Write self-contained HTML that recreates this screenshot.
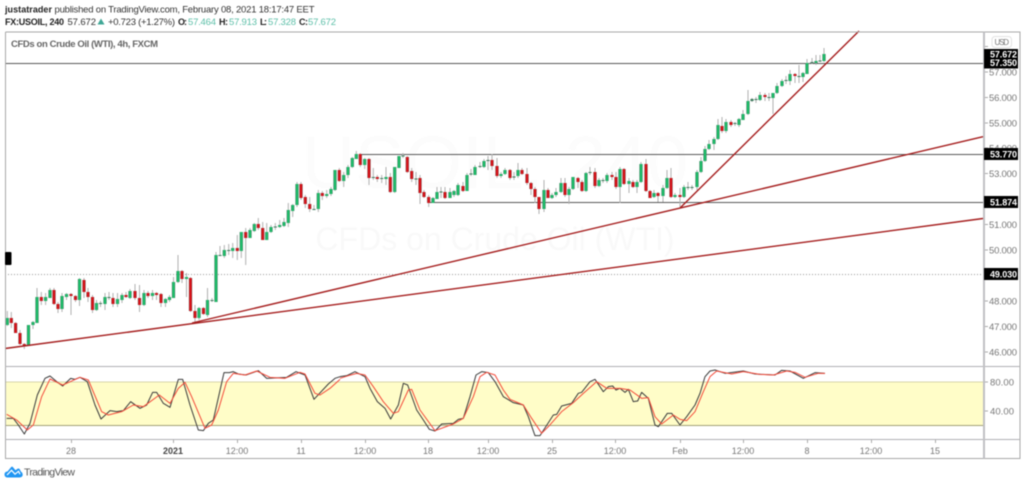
<!DOCTYPE html>
<html><head><meta charset="utf-8"><style>
html,body{margin:0;padding:0;background:#fff;width:1024px;height:485px;overflow:hidden}
svg{display:block;filter:blur(.4px)}
text{font-family:"Liberation Sans",sans-serif}
.h{font-size:9.5px;fill:#333}.b{font-weight:bold;fill:#222;font-size:9px}.t{fill:#5cbfa8}
.p{font-size:9.5px;fill:#777}.x{font-size:9px;fill:#777;text-anchor:middle}
.w{font-size:9px;fill:#fff;font-weight:bold}
</style></head><body>
<svg width="1024" height="485" viewBox="0 0 1024 485" xmlns="http://www.w3.org/2000/svg">
<rect width="1024" height="485" fill="#fff"/>
<!-- header -->
<text class="h b" x="5" y="12.5" textLength="47">justatrader</text>
<text class="h" x="54.5" y="12.5" textLength="260">published on TradingView.com, February 08, 2021 18:17:47 EET</text>
<text class="h b" x="5" y="25" textLength="59">FX:USOIL, 240</text>
<text class="h" x="67.5" y="25" textLength="28.5">57.672</text>
<path d="M97.5 24.5L101 18.5L104.5 24.5Z" fill="#3fa796"/>
<text class="h" x="108" y="25" textLength="67">+0.723 (+1.27%)</text>
<text class="h b" x="178" y="25" textLength="9">O:</text><text class="h t" x="188" y="25" textLength="28">57.464</text>
<text class="h b" x="219" y="25" textLength="9">H:</text><text class="h t" x="229" y="25" textLength="28">57.913</text>
<text class="h b" x="260" y="25" textLength="7">L:</text><text class="h t" x="268" y="25" textLength="28">57.328</text>
<text class="h b" x="299" y="25" textLength="9">C:</text><text class="h t" x="308" y="25" textLength="28">57.672</text>
<!-- watermark -->
<text x="495" y="188" text-anchor="middle" font-size="74" fill="#fcfcfc">USOIL, 240</text>
<text x="495" y="250" text-anchor="middle" font-size="32" fill="#f9f9f9">CFDs on Crude Oil (WTI)</text>
<text x="11" y="47" font-size="9.5" font-weight="bold" fill="#666" textLength="147">CFDs on Crude Oil (WTI), 4h, FXCM</text>
<!-- indicator band -->
<rect x="5" y="382" width="979" height="43.5" fill="#fffdc8"/>
<path d="M5 382H984" stroke="#d8d6a8" stroke-width="1"/>
<path d="M5 425.5H984" stroke="#a3a278" stroke-width="1"/>
<!-- horizontals -->
<path d="M5 274.5H984" stroke="#999" stroke-width="1" stroke-dasharray="1 2"/>
<path d="M5 63.5H984M360 154.5H984M428 202.5H984" stroke="#5a5a5a" stroke-width="1" fill="none"/>
<!-- candles -->
<path fill="none" stroke="#b0b0b0" stroke-width="1" d="M7.3 311V326M11.3 312V328M15.6 322V333M20 330V345M24.3 343V349M28.5 325V346M33 321V329M37 288V323M41.3 292V305M45.6 293V305M50 288V298M54 288V305M58 302V313M62 293V312M66.5 293V300M71 293V315M75.5 295V302M79.5 278V306M84 278V298M88 288V302M92.5 295V313M96.5 300V311M100.5 301V307M105 293V310M109 292V300M113 293V307M117.5 293V307M122 293V303M126 292V298M130 289V299M135 284V300M139.5 285V312M144 290V306M148 291V298M152.5 290V300M156.5 292V300M161 293V307M165.5 298V307M169.5 295V302M173.5 277V298M178 255V283M182 270V283M186.5 273V297M190.5 277V312M195 305V322M199 307V320M203.5 307V315M207.5 288V317M212 298V302M216 252V302
M220 246V256M224.3 245V258M228.7 244V255M232.7 243V258M237.3 235V260M241.3 232V258M245.7 228V265M250 228V238M254.3 223V232M258.3 218V230M262.7 222V240M266.7 223V240M271 225V233M275.3 223V230M279.7 220V228M284 218V227M288.3 203V227M292.7 204V217M297 182V207M301 182V200M305.3 195V208M309.7 197V212M314 205V210M318.3 190V212M322.3 191V200M326.7 190V198M331 187V196M335 170V191M339.3 168V182M343.7 172V187M348 165V178M352.3 157V168M356.3 151V159M360.3 153V167M364.7 158V169M369 158V185M373.3 168V180M377.3 175V182M381.7 175V183M386 167V185M390.3 173V193M394.7 167V193M399 156V168M403 153V158M407.3 156V173M411.7 168V182M416 172V185M420 175V204M424 190V198M428.7 195V207
M433 197V203M437 187V199M441 187V198M445 187V199M450 188V198M454 190V197M458 183V196M463 182V192M467 173V191M471 169V176M475 165V175M480 162V168M484 159V168M488 156V170M492 154V170M497 158V178M501 172V178M505 168V175M510 169V180M514 172V180M518 163V178M522 168V175M527 168V185M531 182V195M535 187V203M539 197V214M544 180V212M548 188V198M552 193V199M556 188V197M561 178V193M565 178V197M569 187V204M573 177V190M578 177V188M582 180V192M586 172V192M590 167V175M595 168V188M599 178V187M603 178V183M607 173V183M612 172V180M616 172V189M620 167V203M624 168V185M629 178V193M633 180V188M637 180V193M641 162V183M646 159V192M650 190V198M654 190V198M658 192V202M663 185V202M667 170V189M671 168V198M675 193V198M680 188V207M684 185V198M688 182V190M692 185V190M697 170V190
M701 157V173M705 146V162M709 140V150M714 137V150M718 119V140M722 117V133M726 119V133M731 120V127M735 122V126M739 118V127M743 110V120M748 90V115M752 98V102M756 97V103M760 92V101M765 93V101M769 93V101M773 93V114M777 83V94M782 79V87M786 76V84M790 70V85M795 73V83M799 65V83M803 72V82M807 59V74M812 58V64M816 55V65M820 55V62M824 48V62"/>
<path id="gb" fill="none" stroke="#3d7a5c" stroke-width="3.2" d="M7.3 318V325M28.5 325V346M33 322V325M37 297V323M45.6 297V301M50 290V298M62 296V309M66.5 294V297M79.5 279V300M96.5 303V310M100.5 303V304M105 297V304M109 297V298M117.5 299V304M122 295V300M130 291V298M144 293V305M152.5 293V296M165.5 299V303M169.5 297V300M173.5 282V298M178 271V282M186.5 277V279M199 308V318M207.5 300V315M212 300V301M216 255V302
M220 255V256M224.3 250V256M228.7 250V251M232.7 248V251M241.3 232V251M250 230V238M254.3 224V231M266.7 232V240M271 227V232M275.3 226.5V227.5M279.7 225V227M284 222V226M288.3 210V223M292.7 205V211M297 184V205M314 209V210M318.3 193V209M326.7 194V196M331 189V194M335 170V190M343.7 175V181M348 167V175M352.3 158V167M356.3 154V159M364.7 159V165M373.3 177V178M381.7 178V179M386 177V179M394.7 167V192M399 156V168M403 155.5V156.5M416 178.5V179.5
M433 198V203M437 192V199M441 191.5V192.5M450 192V198M454 191V195M458 185V195M467 175V191M471 173.5V174.5M475 167V175M480 166V167M484 161V167M488 160V161M501 174V176M505 170V174M514 176.5V177.5M518 170V176M544 190V209M552 195V198M556 192V195M561 183V192M569 189V195M573 177V189M586 173V191M590 172V173M599 180V186M603 180V181M607 175V181M620 169V187M629 181V184M637 182V187M641 164V182M654 193V197M663 188V196M667 178V188M675 195V197M684 187V197M688 187V188M692 187V188M697 172V187
M701 161V172M705 149V161M709 144V149M714 139V144M718 125V139M726 122V131M735 123V124M739 119V125M743 114V120M748 101V114M752 99V101M756 99V100M760 95V100M769 97V98M773 93V98M777 86V93M782 81V86M786 80V81M790 74V81M799 76V77M803 73V77M807 63V74M812 62V63M816 61V63M820 60.5V61.5M824 54V61"/>
<path fill="none" stroke="#1cc06a" stroke-width="2.1" d="M7.3 318V325M28.5 325V346M33 322V325M37 297V323M45.6 297V301M50 290V298M62 296V309M66.5 294V297M79.5 279V300M96.5 303V310M105 297V304M117.5 299V304M122 295V300M130 291V298M144 293V305M152.5 293V296M165.5 299V303M169.5 297V300M173.5 282V298M178 271V282M186.5 277V279M199 308V318M207.5 300V315M216 255V302M224.3 250V256M232.7 248V251M241.3 232V251M250 230V238M254.3 224V231M266.7 232V240M271 227V232M279.7 225V227M284 222V226M288.3 210V223M292.7 205V211M297 184V205M318.3 193V209M326.7 194V196M331 189V194M335 170V190M343.7 175V181M348 167V175M352.3 158V167M356.3 154V159M364.7 159V165M386 177V179M394.7 167V192M399 156V168M433 198V203M437 192V199M450 192V198M454 191V195M458 185V195M467 175V191M475 167V175M484 161V167M501 174V176M505 170V174M518 170V176M544 190V209M552 195V198M556 192V195M561 183V192M569 189V195M573 177V189M586 173V191M599 180V186M607 175V181M620 169V187M629 181V184M637 182V187M641 164V182M654 193V197M663 188V196M667 178V188M675 195V197M684 187V197M697 172V187M701 161V172M705 149V161M709 144V149M714 139V144M718 125V139M726 122V131M739 119V125M743 114V120M748 101V114M760 95V100M773 93V98M777 86V93M782 81V86M790 74V81M803 73V77M807 63V74M816 61V63M824 54V61"/>
<path fill="none" stroke="#7a3a3a" stroke-width="3.2" d="M11.3 318V323M15.6 323V333M20 333V344M24.3 344V346M41.3 297V301M54 290V304M58 304V309M71 294V296M75.5 296V300M84 280V292M88 292V297M92.5 297V310M113 298V304M126 295V297M135 291V298M139.5 298V305M148 293V296M156.5 293V295M161 294V303M182 271V279M190.5 278V311M195 311V318M203.5 308V314M237.3 248V251M245.7 232V238M258.3 224V228M262.7 228V240M301 184V198M305.3 197V204M309.7 204V209M322.3 193V196M339.3 170V181M360.3 154V165M369 159V178M377.3 177V179M390.3 177V192M407.3 157V172M411.7 171V179M420 178V193M424 192V197M428.7 197V203M445 192V198M463 186V191M492 160V166M497 166V176M510 170V178M522 170V174M527 174V183M531 183V189M535 189V197M539 197V209M548 190V198M565 183V195M578 178V182M582 182V191M595 172V186M612 175V177M616 177V187M624 169V184M633 182V187M646 164V191M650 191V198M658 193V196M671 178V197M680 195V197M722 126V131M731 122V125M765 95V97M795 74V76"/>
<path fill="none" stroke="#dc1018" stroke-width="2.1" d="M11.3 318V323M15.6 323V333M20 333V344M24.3 344V346M41.3 297V301M54 290V304M58 304V309M71 294V296M75.5 296V300M84 280V292M88 292V297M92.5 297V310M113 298V304M126 295V297M135 291V298M139.5 298V305M148 293V296M156.5 293V295M161 294V303M182 271V279M190.5 278V311M195 311V318M203.5 308V314M237.3 248V251M245.7 232V238M258.3 224V228M262.7 228V240M301 184V198M305.3 197V204M309.7 204V209M322.3 193V196M339.3 170V181M360.3 154V165M369 159V178M377.3 177V179M390.3 177V192M407.3 157V172M411.7 171V179M420 178V193M424 192V197M428.7 197V203M445 192V198M463 186V191M492 160V166M497 166V176M510 170V178M522 170V174M527 174V183M531 183V189M535 189V197M539 197V209M548 190V198M565 183V195M578 178V182M582 182V191M595 172V186M612 175V177M616 177V187M624 169V184M633 182V187M646 164V191M650 191V198M658 193V196M671 178V197M680 195V197M722 126V131M731 122V125M765 95V97M795 74V76"/>
<!-- trend lines -->
<path d="M5 348.5L983 218.5M192 323L983 136.7M680 208L859 31" fill="none" stroke="#a51d1d" stroke-width="1.4"/>
<!-- stochastic -->
<g fill="none" stroke-width="3" stroke-linejoin="round">
<g transform="translate(0,360) scale(.33333)">
<path stroke="#3a3a3a" d="M20 175L40 175 55 195 73 222 90 190 112 105 135 55 150 48 170 65 188 78 212 55 225 58 240 52 262 65 285 135 303 177 330 152 350 155 370 152 392 125 420 145 440 135 458 97 470 97 490 130 510 142 535 58 548 58 570 135 595 210 610 212 625 190 640 180 672 38 688 38 700 35 715 42 738 45 775 32 800 55 860 52 888 35 915 45 942 118 985 72 1005 55 1020 50"/>
<path stroke="#f44a3a" d="M20 163L50 180 82 210 100 195 125 110 150 57 188 75 240 52 265 60 305 155 325 165 365 155 400 135 430 140 478 105 510 130 535 85 555 67 575 110 615 205 635 195 655 150 680 65 700 40 735 45 770 33 810 52 855 55 900 37 915 42 945 100 960 105 990 85 1020 58"/>
</g>
<g transform="translate(340,360) scale(.33333)">
<path stroke="#3a3a3a" d="M0 50L20 47 45 35 75 50 90 85 112 125 135 145 152 177 175 135 190 70 203 75 230 150 250 180 268 208 285 213 305 192 340 190 355 178 370 175 390 110 408 45 425 35 445 38 465 65 490 110 520 128 550 135 565 170 585 227 600 227 640 165 650 163 665 138 695 130 715 100 725 97 750 65 765 58 790 95 805 80 818 78 828 90 840 85 855 97 865 88 880 125 893 123 905 97 925 115 945 195 955 200 982 160 995 160 1020 195"/>
<path stroke="#f44a3a" d="M0 55L25 47 50 40 75 45 100 80 130 125 160 160 175 155 205 90 215 88 240 150 285 212 340 192 370 175 400 110 420 50 440 37 465 45 490 90 510 118 550 135 575 175 605 220 625 200 665 155 700 128 730 100 770 65 800 85 840 85 870 90 905 115 925 113 945 170 965 192 1000 165 1020 178"/>
</g>
<g transform="translate(680,360) scale(.33333)">
<path stroke="#3a3a3a" d="M0 195L20 170 45 135 60 100 75 50 90 33 105 30 135 40 190 33 225 42 285 45 305 31 330 33 370 55 405 38 435 40"/>
<path stroke="#f44a3a" d="M0 178L20 182 45 155 70 95 90 50 110 33 155 42 190 35 240 43 280 45 320 33 345 37 375 52 415 40 435 40"/>
</g>
</g>
<!-- frame -->
<path d="M5.5 32V458.5H1020V32H5.5" fill="none" stroke="#a8a8a8" stroke-width="1"/>
<path d="M5 366.5H1020M5 439.5H1020" stroke="#b0b0b4" stroke-width="1"/>
<path d="M984 32V458.5" stroke="#c0c0c4" stroke-width="2"/>
<rect x="5" y="252" width="6.5" height="13" rx="1" fill="#000"/>
<!-- x ticks and labels -->
<path d="M71.5 440v3M173.5 440v3M237.5 440v3M301.5 440v3M365.5 440v3M428.5 440v3M488.5 440v3M552.5 440v3M615.5 440v3M680.5 440v3M743.5 440v3M807.5 440v3M871.5 440v3M935.5 440v3" stroke="#aaa"/>
<text class="x" x="71" y="454">28</text>
<text class="x" x="173" y="454" font-weight="bold" style="fill:#444">2021</text>
<text class="x" x="237" y="454">12:00</text>
<text class="x" x="301" y="454">11</text>
<text class="x" x="365" y="454">12:00</text>
<text class="x" x="428" y="454">18</text>
<text class="x" x="488" y="454">12:00</text>
<text class="x" x="552" y="454">25</text>
<text class="x" x="615" y="454">12:00</text>
<text class="x" x="680" y="454">Feb</text>
<text class="x" x="743" y="454">12:00</text>
<text class="x" x="807" y="454">8</text>
<text class="x" x="871" y="454">12:00</text>
<text class="x" x="935" y="454">15</text>
<!-- price axis -->
<path d="M985 46.5h3M985 72h3M985 97.5h3M985 123h3M985 148h3M985 173.5h3M985 199h3M985 224.5h3M985 250h3M985 301h3M985 326.5h3M985 352h3M985 382h3M985 411h3" stroke="#aaa"/>
<text class="p" x="989" y="75.5" textLength="28">57.000</text>
<text class="p" x="989" y="101" textLength="28">56.000</text>
<text class="p" x="989" y="126.5" textLength="28">55.000</text>
<text class="p" x="989" y="151.5" textLength="28">54.000</text>
<text class="p" x="989" y="177" textLength="28">53.000</text>
<text class="p" x="989" y="228" textLength="28">51.000</text>
<text class="p" x="989" y="253.5" textLength="28">50.000</text>
<text class="p" x="989" y="304.5" textLength="28">48.000</text>
<text class="p" x="989" y="330" textLength="28">47.000</text>
<text class="p" x="989" y="355.5" textLength="28">46.000</text>
<text class="p" x="990" y="385.5" textLength="24">80.00</text>
<text class="p" x="990" y="414.5" textLength="24">40.00</text>
<!-- USD -->
<rect x="992" y="36.5" width="19.5" height="11" rx="3" fill="#fff" stroke="#e2e2e2"/>
<text x="994.5" y="45" font-size="8" fill="#777" textLength="14.5">USD</text>
<!-- price tags -->
<rect x="984" y="49" width="34" height="19.5" fill="#000"/>
<text class="w" x="990" y="57.5" textLength="27">57.672</text>
<text class="w" x="990" y="66" textLength="27">57.350</text>
<rect x="984" y="148" width="34" height="12" fill="#000"/>
<text class="w" x="990" y="157.5" textLength="27">53.770</text>
<rect x="984" y="196" width="34" height="12" fill="#000"/>
<text class="w" x="990" y="205.5" textLength="27">51.874</text>
<rect x="984" y="268" width="34" height="12" fill="#000"/>
<text class="w" x="990" y="277.5" textLength="27">49.030</text>
<!-- logo -->
<g transform="translate(4.5,466)">
<path d="M0 8.5C0 6.5 1.5 5.5 3 5.5L6.5 1.2C7 .5 8 .5 8.5 1.2L11 4.2L13 2.8C14 2.2 15 2.6 15.3 3.4L16.5 5.8C17.8 6.3 18.2 7.8 18.2 8.8C18.2 10.6 16.7 11.5 15 11.5H3C1.2 11.5 0 10.2 0 8.5Z" fill="#2196f3"/>
<path d="M2.5 9L7 4.3L10.5 8.2L14 5.3L15.5 8.2" fill="none" stroke="#fff" stroke-width="1.2"/>
</g>
<text x="24" y="475.5" font-size="10.5" fill="#555" textLength="51">TradingView</text>
</svg>
</body></html>
